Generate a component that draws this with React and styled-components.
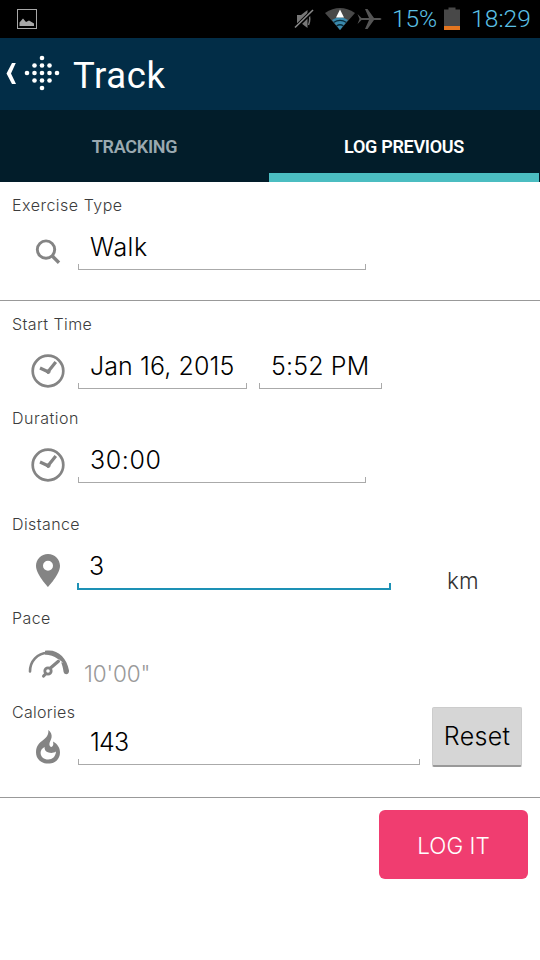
import React from 'react';
import styled, { createGlobalStyle } from 'styled-components';

const GlobalStyle = createGlobalStyle`
    * {
        box-sizing: border-box;
    }
    body {
        margin: 0;
        background: #fff;
        font-family: Inter, "Open Sans", sans-serif;
    }
`

function ClockIcon() {
    return (
        <svg width="36" height="36" viewBox="0 0 36 36" fill="none" stroke="#848484">
            <circle cx="18" cy="18" r="15.3" strokeWidth="2.7" />
            <path d="M10 15L18 18.7L25.8 9" strokeWidth="3.2" />
            <circle cx="18.3" cy="18.7" r="1.8" fill="#848484" />
        </svg>
    );
}

function SearchIcon() {
    return (
        <svg width="36" height="36" viewBox="0 0 36 36" fill="none" stroke="#848484">
            <circle cx="16" cy="15.6" r="8.7" strokeWidth="2.9" />
            <path d="M22 21.8L29 28.8" strokeWidth="3.4" />
        </svg>
    );
}

function PinIcon() {
    return (
        <svg width="36" height="36" viewBox="0 0 36 36" fill="#848484">
            <path fillRule="evenodd" d="M18 1C11.2 1 6 6.2 6 12.8C6 21.5 18 34 18 34S30 21.5 30 12.8C30 6.2 24.8 1 18 1ZM18 7.8A5 5 0 1 1 18 17.8A5 5 0 1 1 18 7.8Z" />
        </svg>
    );
}

function GaugeIcon() {
    return (
        <svg width="44" height="36" viewBox="0 0 44 36" fill="none" stroke="#848484" strokeLinecap="round">
            <path d="M4 24.5C4 14 11.5 6 21.5 6" strokeWidth="2.6" />
            <path d="M19 3.8C31 1.5 40.5 10 43 23.5C43.5 27.8 38.6 28.4 37.6 25C37 21 36.2 18 35 14.8L34 13L31.5 11.8C28 9 24 7.7 19 7.4Z" fill="#848484" stroke="none" />
            <path d="M32.6 13.4L36 15.2" stroke="#fff" strokeWidth="1" />
            <path d="M24.8 20.8L32.4 14.2M19.5 27L17.6 29" strokeWidth="3.2" />
            <circle cx="22" cy="24" r="3.2" strokeWidth="2.8" />
        </svg>
    );
}

function FlameIcon() {
    return (
        <svg width="36" height="36" viewBox="0 0 36 36" fill="#848484">
            <path fillRule="evenodd" d="M18.3 0C20.8 2 22 4.5 21.6 7.2C21.2 9.8 19.6 11.6 19.4 14C19.3 16 20.6 17.4 22 16.8C23.4 16 23.6 13.8 23 11.6C27.5 14 30 18 30 22.4C30 29.2 24.8 33.6 18 33.6S6 29 6 22.2C6 16 9.4 12.8 13.5 9.8C16.8 7.3 18.9 4 18.3 0ZM14.6 17C11.8 18.5 10.6 20.5 10.6 22.8C10.6 27 14 29.6 18.2 29.6S25.7 26.6 26 21.6C23.6 23.2 21 23.4 18.6 22.6C15.6 21.6 14.2 19.6 14.6 17Z" />
        </svg>
    );
}

function DotsLogo() {
    const dots = [[18, 3], [10.5, 10.5], [18, 10.5], [25.5, 10.5], [3, 18], [10.5, 18], [18, 18], [25.5, 18], [33, 18], [10.5, 25.5], [18, 25.5], [25.5, 25.5], [18, 33]];
    return (
        <svg width="36" height="36" viewBox="0 0 36 36" fill="#fff">
            {dots.map(([x, y]) => <circle key={`${x}-${y}`} cx={x} cy={y} r="2.3" />)}
        </svg>
    );
}

function Field({ width, focused, spacing, children }) {
    return (
        <FieldBox $width={width} $focused={focused}>
            <Value $spacing={spacing}>{children}</Value>
            <Underline $focused={focused} />
        </FieldBox>
    );
}

function App() {
    return (
        <Screen>
            <GlobalStyle />
            <StatusBar>
                <svg width="20" height="20" viewBox="0 0 20 20">
                    <rect x="0.5" y="0.5" width="19" height="19" fill="none" stroke="#a8a8a8" />
                    <path d="M2.5 17V13.5L6 9.5L9 13L12 11.5L17 14.5V17Z" fill="#a8a8a8" />
                </svg>
                <StatusRight>
                    <svg width="20" height="22" viewBox="0 0 20 22">
                        <path d="M3 7H7L13.5 2V20L7 15H3Z" fill="#777" />
                        <path d="M14.5 5Q17 11 14.5 17" fill="none" stroke="#777" strokeWidth="1.5" />
                        <path d="M1 20L19 2.5" stroke="#000" strokeWidth="4" />
                        <path d="M1 19.5L19 2" stroke="#8a8a8a" strokeWidth="1.6" />
                    </svg>
                    <svg width="30" height="24" viewBox="0 0 30 24">
                        <path d="M0 6Q15 -4 30 6L15 23Z" fill="#484848" />
                        <path d="M7 13Q15 7.5 23 13L15 23Z" fill="#3989ad" />
                        <path d="M8.5 15.5Q15 11.2 21.5 15.5M11.5 19Q15 16.5 18.5 19" fill="none" stroke="#082b3a" strokeWidth="1.3" />
                        <path d="M15 2.5L19 10.5H11Z" fill="#fff" />
                    </svg>
                    <svg width="26" height="22" viewBox="0 0 26 22">
                        <path d="M0.5 6L4.5 10H12L8 1H10.5L17 10H23Q26 11 23 12H17L10.5 21H8L12 12H4.5L0.5 16L2.5 11Z" fill="#555" />
                    </svg>
                    <StatusText $width={46}>15%</StatusText>
                    <svg width="16" height="24" viewBox="0 0 16 24">
                        <path d="M0 2.5H4.5V0.5H11.5V2.5H16V23H0Z" fill="#484848" />
                        <rect y="19" width="16" height="4" fill="#e47620" />
                    </svg>
                    <StatusText $width={61}>18:29</StatusText>
                </StatusRight>
            </StatusBar>

            <TitleBar>
                <svg width="12" height="24" viewBox="0 0 12 24">
                    <path d="M9.8 1H6L0.5 11.5L6 22H10L5 11.5Z" fill="#fff" />
                </svg>
                <DotsLogo />
                <Title>Track</Title>
            </TitleBar>

            <Tabs>
                <Tab>TRACKING</Tab>
                <Tab $active>LOG PREVIOUS</Tab>
            </Tabs>

            <Section $height={119}>
                <Group $height={106}>
                    <Label $spacing="0.5px">Exercise Type</Label>
                    <Row>
                        <IconCell><SearchIcon /></IconCell>
                        <Field width={288} spacing="0.5px">Walk</Field>
                    </Row>
                </Group>
            </Section>

            <Section $height={497}>
                <Group $height={94}>
                    <Label>Start Time</Label>
                    <Row>
                        <IconCell><ClockIcon /></IconCell>
                        <Field width={169} spacing="0.1px">Jan 16, 2015</Field>
                        <Field width={123} spacing="0.15px">5:52 PM</Field>
                    </Row>
                </Group>
                <Group $height={106}>
                    <Label $spacing="0.5px">Duration</Label>
                    <Row>
                        <IconCell><ClockIcon /></IconCell>
                        <Field width={288} spacing="0.6px">30:00</Field>
                    </Row>
                </Group>
                <Group $height={94}>
                    <Label>Distance</Label>
                    <Row>
                        <IconCell><PinIcon /></IconCell>
                        <Field width={314} focused>3</Field>
                        <Unit>km</Unit>
                    </Row>
                </Group>
                <Group $height={94}>
                    <Label>Pace</Label>
                    <Row>
                        <IconCell $wide><GaugeIcon /></IconCell>
                        <Pace>10'00"</Pace>
                    </Row>
                </Group>
                <Group $height={84}>
                    <Label $spacing="0.3px">Calories</Label>
                    <Row $height={42}>
                        <IconCell $low><FlameIcon /></IconCell>
                        <Field width={342} spacing="-0.8px">143</Field>
                        <ResetButton>Reset</ResetButton>
                    </Row>
                </Group>
            </Section>

            <Footer>
                <LogButton>LOG IT</LogButton>
            </Footer>
        </Screen>
    );
}

export default App;

const Screen = styled.div`
    width: 540px;
    height: 960px;
    overflow: hidden;
    background: #fff;
    display: flex;
    flex-direction: column;
`

const StatusBar = styled.div`
    height: 38px;
    flex: none;
    padding: 0 9px 0 17px;
    background: #000;
    display: flex;
    align-items: center;
    justify-content: space-between;
`

const StatusRight = styled.div`
    display: flex;
    align-items: center;
    svg:nth-of-type(2) {
        margin: 0 2px 0 11px;
    }
`

const StatusText = styled.span`
    width: ${props => props.$width}px;
    margin: 0 6px 0 8px;
    padding: 0 0 0 1px;
    font-family: Roboto, sans-serif;
    font-size: 24.5px;
    font-weight: 300;
    line-height: 28px;
    color: #5bc0e6;
    white-space: nowrap;
    padding-bottom: 1px;
    letter-spacing: -0.1px;
    margin-right: 7px;
    &:last-child {
        margin: 0 0 0 10px;
        letter-spacing: 0.1px;
    }
`

const TitleBar = styled.div`
    height: 72px;
    flex: none;
    padding-left: 6px;
    background: #022d47;
    display: flex;
    align-items: center;

    svg + svg {
        margin: 0 13px 2px 6px;
    }
`

const Title = styled.h1`
    margin: 4px 0 0;
    font-family: Roboto, sans-serif;
    font-size: 36.5px;
    font-weight: 400;
    letter-spacing: 0.6px;
    line-height: 44px;
    color: #fff;
`

const Tabs = styled.div`
    height: 72px;
    flex: none;
    background: #021d2a;
    display: grid;
    grid-template-columns: 269px 270px;
`

const Tab = styled.div`
    border-bottom: 9px solid ${props => props.$active ? '#4bbdc1' : 'transparent'};
    padding-top: 10px;
    display: flex;
    align-items: center;
    justify-content: center;
    font-family: Roboto, sans-serif;
    font-size: 18px;
    font-weight: 600;
    letter-spacing: -0.3px;
    color: ${props => props.$active ? '#fff' : '#9aa9b0'};
`

const Section = styled.section`
    height: ${props => props.$height}px;
    flex: none;
    padding-top: 12px;
    border-bottom: 1px solid #999;
`

const Group = styled.div`
    height: ${props => props.$height}px;
`

const Label = styled.div`
    height: 22px;
    padding-left: 12px;
    font-size: 16px;
    font-weight: 300;
    line-height: 22px;
    letter-spacing: ${props => props.$spacing || '0.4px'};
    color: #3c3c3c;
`

const Row = styled.div`
    height: ${props => props.$height || 54}px;
    padding-right: 18px;
    display: flex;
    align-items: flex-end;
`

const IconCell = styled.div`
    width: 78px;
    height: 36px;
    flex: none;
    padding-left: ${props => props.$wide ? 26 : 30}px;
    margin-bottom: ${props => props.$low ? -1 : 0}px;
`

const FieldBox = styled.div`
    width: ${props => props.$width}px;
    flex: none;
    margin-right: 12px;
    margin-left: ${props => props.$focused ? -1 : 0}px;
    margin-bottom: ${props => props.$focused ? -1 : 0}px;
`

const Value = styled.div`
    height: 33px;
    padding-left: 12px;
    font-size: 25px;
    font-weight: 300;
    line-height: 32px;
    letter-spacing: ${props => props.$spacing || '0px'};
    color: #000;
    white-space: nowrap;
`

const Underline = styled.div`
    height: ${props => props.$focused ? 7 : 6}px;
    border: solid ${props => props.$focused ? '#1d91b5' : '#aaa'};
    border-width: ${props => props.$focused ? '0 2px 2px' : '0 1px 1px'};
`

const Unit = styled.div`
    margin: 0 0 -6px 44px;
    font-size: 22.5px;
    font-weight: 300;
    line-height: 28px;
    color: #333;
`

const Pace = styled.div`
    margin: 0 0 -5px 6px;
    font-size: 22.5px;
    font-weight: 300;
    line-height: 28px;
    letter-spacing: -0.1px;
    color: #999;
`

const ResetButton = styled.button`
    width: 90px;
    height: 60px;
    flex: none;
    margin-bottom: -2px;
    padding: 0 0 1px;
    border: 1px solid #ccc;
    border-bottom: 2px solid #999;
    border-radius: 2px;
    background: #d6d6d6;
    font-family: inherit;
    font-size: 25px;
    font-weight: 300;
    letter-spacing: 0.3px;
    color: #000;
`

const Footer = styled.footer`
    padding: 12px;
    display: flex;
    justify-content: flex-end;
`

const LogButton = styled.button`
    width: 149px;
    height: 69px;
    padding: 2px 0 0;
    border: 0;
    border-radius: 6px;
    background: #f03d70;
    font-family: inherit;
    font-size: 22.5px;
    font-weight: 300;
    color: #fff;
`
